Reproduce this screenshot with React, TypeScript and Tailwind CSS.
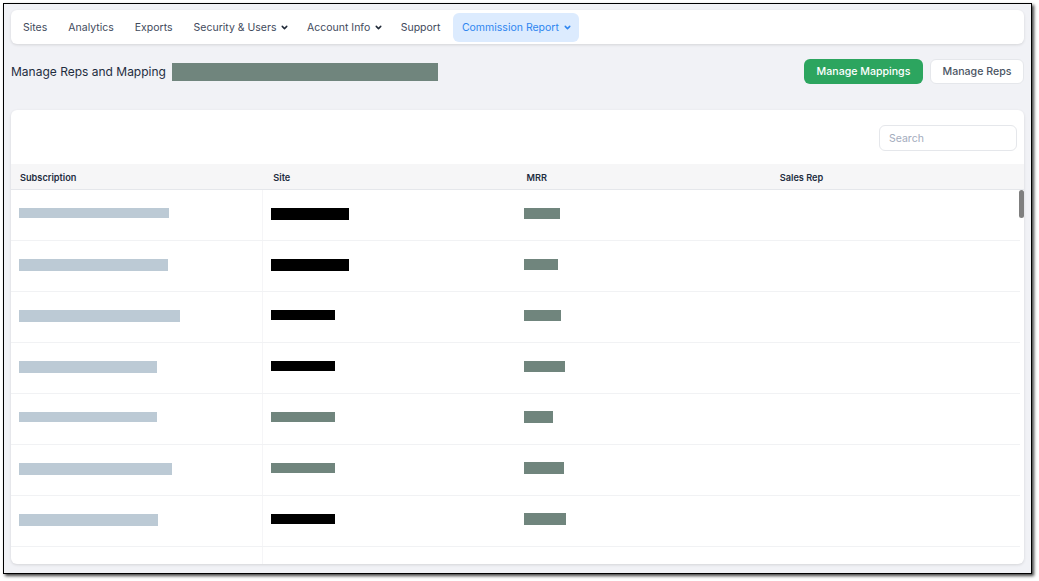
import { ChevronDown } from "lucide-react";

const navItems = [
  { label: "Sites" },
  { label: "Analytics" },
  { label: "Exports" },
  { label: "Security & Users", menu: true },
  { label: "Account Info", menu: true },
  { label: "Support" },
];

// widths and heights of the blanked out cells, they differ from row to row
const rows: {
  sub: number;
  subH: number;
  site: number;
  siteH: number;
  siteMuted?: boolean;
  mrr: number;
  mrrH: number;
  mrrLift?: boolean;
}[] = [
  { sub: 150, subH: 10, site: 78, siteH: 12, mrr: 36, mrrH: 11 },
  { sub: 149, subH: 12, site: 78, siteH: 12, mrr: 34, mrrH: 11 },
  { sub: 161, subH: 12, site: 64, siteH: 10, mrr: 37, mrrH: 11 },
  { sub: 138, subH: 12, site: 64, siteH: 10, mrr: 41, mrrH: 11 },
  { sub: 138, subH: 10, site: 64, siteH: 10, siteMuted: true, mrr: 29, mrrH: 12, mrrLift: true },
  { sub: 153, subH: 12, site: 64, siteH: 10, siteMuted: true, mrr: 40, mrrH: 12, mrrLift: true },
  { sub: 139, subH: 12, site: 64, siteH: 10, mrr: 42, mrrH: 12, mrrLift: true },
];

const App = () => {
  return (
    <div className="w-[1039px] h-[581px] bg-white overflow-hidden pt-[3px] pl-[3px] font-['Inter',sans-serif]">
      <div className="w-[1029px] h-[571px] border border-black bg-[#f1f2f6] px-[7px] pt-[6px] pb-[9px] shadow-[2px_2px_3px_rgba(0,0,0,0.75)] flex flex-col">
        <nav className="h-[34px] shrink-0 bg-white rounded-md shadow-[0_1px_3px_rgba(0,0,0,0.12)] flex items-center pl-[3px] text-[10.5px] text-[#3f4a5c]">
          {navItems.map((item) => (
            <a
              key={item.label}
              className={`flex items-center gap-[4px] pl-[9px] mr-[3px] pt-[1px] h-[29px] ${item.menu ? "pr-[5.5px]" : "pr-[9px]"}`}
            >
              {item.label}
              {item.menu && <ChevronDown size={9} strokeWidth={4} className="text-[#1f2937]" />}
            </a>
          ))}
          <a className="ml-[1px] flex items-center gap-[4px] pl-[8.5px] pr-[7.5px] pt-[1px] h-[29px] rounded-md bg-[#dcebfe] text-[#2f86f0]">
            Commission Report
            <ChevronDown size={9} strokeWidth={4} />
          </a>
        </nav>

        <div className="h-[25px] shrink-0 mt-[15px] flex items-center">
          <span className="text-[12px] text-[#1f2d3f]">Manage Reps and Mapping</span>
          <span className="ml-[6px] w-[266px] h-[18px] bg-[#70857d]" />
          <button className="ml-auto h-[25px] w-[119px] pt-[1px] rounded-md bg-[#2ca55f] text-white text-[10.6px] font-medium">
            Manage Mappings
          </button>
          <button className="ml-[7px] h-[25px] w-[94px] pt-[1px] rounded-md bg-white border border-[#e5e7eb] text-[#4b5563] text-[10.6px] font-medium">
            Manage Reps
          </button>
        </div>

        <div className="mt-[26px] flex-1 min-h-0 bg-white rounded-md shadow-[0_1px_3px_rgba(0,0,0,0.12)] flex flex-col overflow-hidden">
          <div className="h-[54px] flex items-center justify-end pr-[7px] pt-[2px] shrink-0">
            <input
              placeholder="Search"
              className="w-[138px] h-[26px] rounded-md border border-[#e5e7eb] px-[9px] text-[10.5px] placeholder:text-[#a3acbd] outline-none"
            />
          </div>
          <div className="h-[26px] shrink-0 pt-[2px] bg-[#f6f6f7] border-b border-[#e5e7eb] grid grid-cols-[253.25px_253.25px_253.25px_1fr] items-center text-[9.2px] font-semibold text-[#1f2d3f]">
            <span className="pl-[9px]">Subscription</span>
            <span className="pl-[9px]">Site</span>
            <span className="pl-[9px]">MRR</span>
            <span className="pl-[9px]">Sales Rep</span>
          </div>
          <div className="relative flex-1 min-h-0 overflow-hidden pr-[4px]">
            {rows.map((row, i) => (
              <div key={i} className="h-[51px] border-b border-[#f1f2f4] grid grid-cols-[252px_253px_253px_1fr]">
                <div className="border-r border-[#f5f5f7] pl-[8px] pt-[18px]">
                  <div className="bg-[#bccad5]" style={{ width: row.sub, height: row.subH }} />
                </div>
                <div className="pl-[8px] pt-[18px]">
                  <div
                    className={row.siteMuted ? "bg-[#70857d]" : "bg-black"}
                    style={{ width: row.site, height: row.siteH }}
                  />
                </div>
                <div className={row.mrrLift ? "pl-[8px] pt-[17px]" : "pl-[8px] pt-[18px]"}>
                  <div className="bg-[#70857d]" style={{ width: row.mrr, height: row.mrrH }} />
                </div>
                <div />
              </div>
            ))}
            <div className="h-[20px] w-[252px] border-r border-[#f5f5f7]" />
            <div className="absolute right-0 top-0 w-[5px] h-[28px] rounded-full bg-[#7f7f7f]" />
          </div>
        </div>
      </div>
    </div>
  );
};

export default App;
